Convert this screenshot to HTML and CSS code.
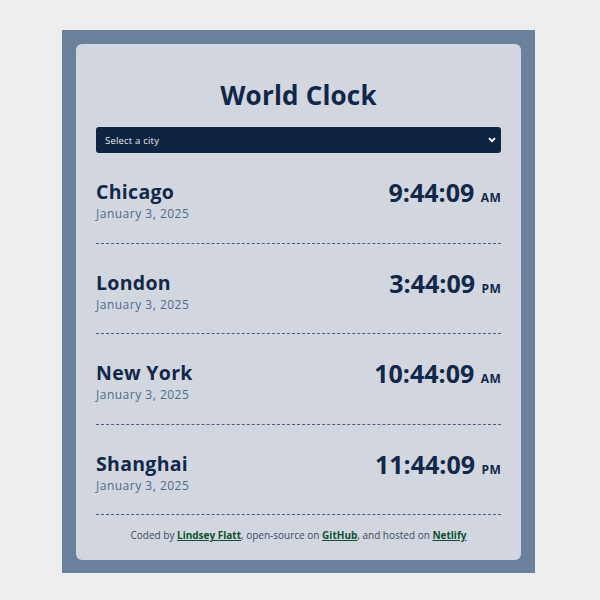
FILE: index.html
```html
<!DOCTYPE html>
<html lang="en">
<head>
<meta charset="utf-8">
<title>World Clock</title>
<link rel="stylesheet" href="styles.css">
</head>
<body>
<div class="frame">
  <div class="card">
    <h1 class="title">World Clock</h1>
    <div class="select">
      <span>Select a city</span>
      <svg width="8" height="6" viewBox="0 0 8 6"><path d="M1 1.2 L4 4.2 L7 1.2" fill="none" stroke="#fff" stroke-width="1.8"/></svg>
    </div>
    <div class="cities">
      <div class="city">
        <div><div class="name">Chicago</div><div class="date">January 3, 2025</div></div>
        <div class="time">9:44:09 <small>AM</small></div>
      </div>
      <div class="city">
        <div><div class="name">London</div><div class="date">January 3, 2025</div></div>
        <div class="time">3:44:09 <small>PM</small></div>
      </div>
      <div class="city">
        <div><div class="name">New York</div><div class="date">January 3, 2025</div></div>
        <div class="time">10:44:09 <small>AM</small></div>
      </div>
      <div class="city">
        <div><div class="name">Shanghai</div><div class="date">January 3, 2025</div></div>
        <div class="time">11:44:09 <small>PM</small></div>
      </div>
    </div>
    <footer class="footer">Coded by <a href="#">Lindsey Flatt</a>, open-source on <a href="#">GitHub</a>, and hosted on <a href="#">Netlify</a></footer>
  </div>
</div>
</body>
</html>
```
FILE: styles.css
```css
body {
  margin: 0;
  background: #eeeeee;
  font-family: "Open Sans", "DejaVu Sans", sans-serif;
}
.frame {
  width: 473px;
  margin: 30px 0 0 62px;
  padding: 14px 14px 13px;
  box-sizing: border-box;
  background: #6b809b;
}
.card {
  background: #d2d6df;
  border-radius: 6px;
  padding: 35px 20px 18px;
}
.title {
  margin: 0 0 16px;
  text-align: center;
  font-size: 26px;
  letter-spacing: 0.2px;
  line-height: 32px;
  font-weight: 700;
  color: #10264a;
}
.select {
  height: 26px;
  background: #0f2443;
  border-radius: 3px;
  display: flex;
  align-items: center;
  justify-content: space-between;
  padding: 0 5px 0 9px;
  color: #e8ebf0;
  font-size: 9.5px;
  letter-spacing: 0.2px;
}
.city {
  display: flex;
  justify-content: space-between;
  align-items: flex-start;
  padding: 26px 0 19.5px;
  border-bottom: 1px dashed #4c5f78;
}
.name {
  font-size: 19.5px;
  letter-spacing: 0.3px;
  font-weight: 700;
  line-height: 26px;
  color: #12284a;
}
.date {
  font-size: 12px;
  letter-spacing: 0.5px;
  line-height: 18px;
  color: #4e6c92;
}
.time {
  font-size: 25px;
  font-weight: 700;
  line-height: 30px;
  color: #12284a;
  margin-top: -2px;
}
.time small {
  font-size: 12px;
  letter-spacing: 0.3px;
}
.footer {
  text-align: center;
  font-size: 10px;
  color: #3b4d66;
  padding-top: 13px;
}
.footer a {
  color: #0f5132;
  font-weight: 700;
}
```
